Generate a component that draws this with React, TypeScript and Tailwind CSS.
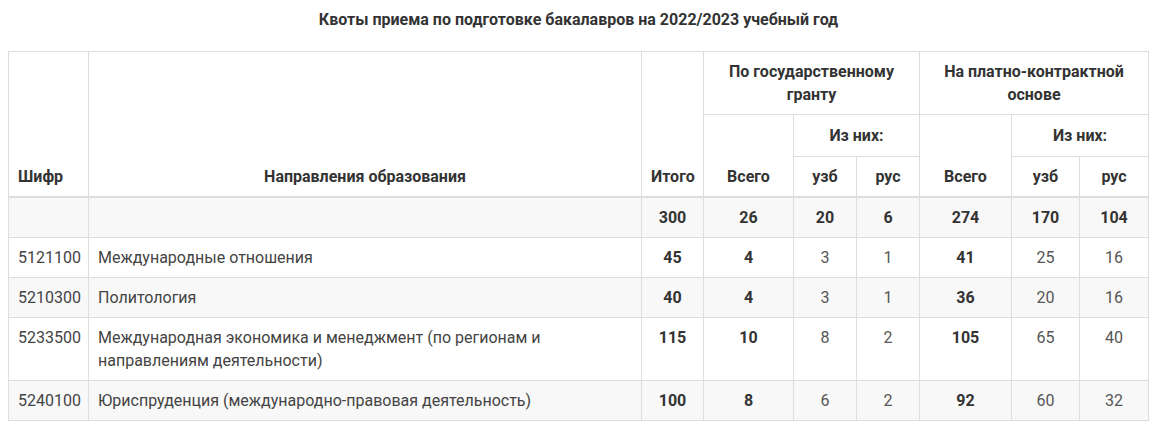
import React from "react";

const rows = [
  { code: "", name: "", v: ["300", "26", "20", "6", "274", "170", "104"], total: true },
  { code: "5121100", name: "Международные отношения", v: ["45", "4", "3", "1", "41", "25", "16"] },
  { code: "5210300", name: "Политология", v: ["40", "4", "3", "1", "36", "20", "16"] },
  {
    code: "5233500",
    name: "Международная экономика и менеджмент (по регионам и направлениям деятельности)",
    v: ["115", "10", "8", "2", "105", "65", "40"],
  },
  {
    code: "5240100",
    name: "Юриспруденция (международно-правовая деятельность)",
    v: ["100", "8", "6", "2", "92", "60", "32"],
  },
];

const boldIdx = [0, 1, 4];

export default function App() {
  const th = "border border-[#ddd] px-[9px] py-[8px] font-bold text-[#333]";
  const td = "border border-[#ddd] px-[9px] py-[8px] align-top";
  return (
    <div
      className="w-[1157px] h-[431px] bg-white text-[16px] leading-[23px] text-[#444]"
      style={{ fontFamily: "Roboto, 'Liberation Sans', sans-serif" }}
    >
      <div className="pt-[8px] mb-[20px] text-center font-bold text-[#333]">
        Квоты приема по подготовке бакалавров на 2022/2023 учебный год
      </div>
      <table className="ml-[8px] w-[1140px] table-fixed border-collapse">
        <colgroup>
          <col className="w-[80px]" />
          <col className="w-[553px]" />
          <col className="w-[62px]" />
          <col className="w-[90px]" />
          <col className="w-[63px]" />
          <col className="w-[63px]" />
          <col className="w-[92px]" />
          <col className="w-[68px]" />
          <col className="w-[69px]" />
        </colgroup>
        <thead>
          <tr>
            <th rowSpan={3} className={`${th} text-left align-bottom border-b-2`}>Шифр</th>
            <th rowSpan={3} className={`${th} text-center align-bottom border-b-2`}>Направления образования</th>
            <th rowSpan={3} className={`${th} text-center align-bottom border-b-2`}>Итого</th>
            <th colSpan={3} className={`${th} text-center align-middle h-[62px] py-[7px]`}>
              По государственному гранту
            </th>
            <th colSpan={3} className={`${th} text-center align-middle py-[7px]`}>
              На платно-контрактной основе
            </th>
          </tr>
          <tr>
            <th rowSpan={2} className={`${th} text-center align-bottom border-b-2`}>Всего</th>
            <th colSpan={2} className={`${th} text-center align-middle h-[42px]`}>Из них:</th>
            <th rowSpan={2} className={`${th} text-center align-bottom border-b-2`}>Всего</th>
            <th colSpan={2} className={`${th} text-center align-middle`}>Из них:</th>
          </tr>
          <tr>
            <th className={`${th} text-center border-b-2 h-[39px] py-[7px]`}>узб</th>
            <th className={`${th} text-center border-b-2 py-[7px]`}>рус</th>
            <th className={`${th} text-center border-b-2 py-[7px]`}>узб</th>
            <th className={`${th} text-center border-b-2 py-[7px]`}>рус</th>
          </tr>
        </thead>
        <tbody>
          {rows.map((r, i) => (
            <tr key={i} className={i % 2 === 0 ? "bg-[#f8f8f8]" : "bg-white"}>
              <td className={`${td} text-left`}>{r.code}</td>
              <td className={`${td} text-left`}>{r.name}</td>
              {r.v.map((x, j) => (
                <td
                  key={j}
                  className={`${td} text-center ${
                    r.total || boldIdx.includes(j) ? "font-bold text-[#333]" : "text-[#555]"
                  }`}
                >
                  {x}
                </td>
              ))}
            </tr>
          ))}
        </tbody>
      </table>
    </div>
  );
}
